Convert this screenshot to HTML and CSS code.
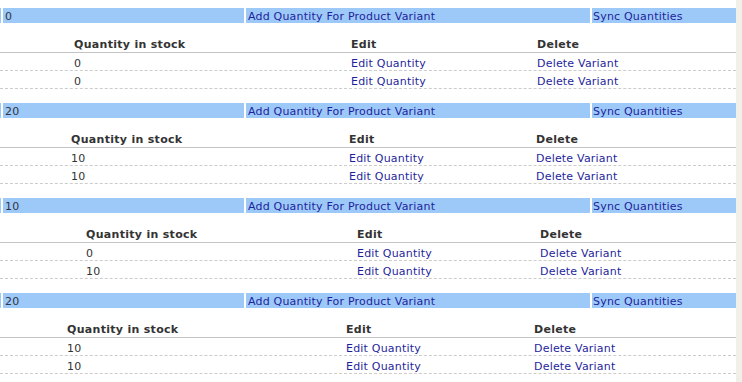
FILE: index.html
```html
<!DOCTYPE html>
<html lang="en">
<head>
    <meta charset="UTF-8">
    <title>Product Variants</title>
    <link rel="stylesheet" href="styles.css">
</head>
<body>
    <div class="page">
        <div class="content">

            <div class="variant v1">
                <div class="bar">
                    <span class="edge"></span>
                    <span class="cell total">0</span>
                    <a class="cell add" href="#">Add Quantity For Product Variant</a>
                    <a class="cell sync" href="#">Sync Quantities</a>
                </div>
                <div class="stock">
                    <div class="row head"><span></span><span>Quantity in stock</span><span>Edit</span><span>Delete</span></div>
                    <div class="row"><span></span><span>0</span><a href="#">Edit Quantity</a><a href="#">Delete Variant</a></div>
                    <div class="row"><span></span><span>0</span><a href="#">Edit Quantity</a><a href="#">Delete Variant</a></div>
                </div>
            </div>

            <div class="variant v2">
                <div class="bar">
                    <span class="edge"></span>
                    <span class="cell total">20</span>
                    <a class="cell add" href="#">Add Quantity For Product Variant</a>
                    <a class="cell sync" href="#">Sync Quantities</a>
                </div>
                <div class="stock">
                    <div class="row head"><span></span><span>Quantity in stock</span><span>Edit</span><span>Delete</span></div>
                    <div class="row"><span></span><span>10</span><a href="#">Edit Quantity</a><a href="#">Delete Variant</a></div>
                    <div class="row"><span></span><span>10</span><a href="#">Edit Quantity</a><a href="#">Delete Variant</a></div>
                </div>
            </div>

            <div class="variant v3">
                <div class="bar">
                    <span class="edge"></span>
                    <span class="cell total">10</span>
                    <a class="cell add" href="#">Add Quantity For Product Variant</a>
                    <a class="cell sync" href="#">Sync Quantities</a>
                </div>
                <div class="stock">
                    <div class="row head"><span></span><span>Quantity in stock</span><span>Edit</span><span>Delete</span></div>
                    <div class="row"><span></span><span>0</span><a href="#">Edit Quantity</a><a href="#">Delete Variant</a></div>
                    <div class="row"><span></span><span>10</span><a href="#">Edit Quantity</a><a href="#">Delete Variant</a></div>
                </div>
            </div>

            <div class="variant v4">
                <div class="bar">
                    <span class="edge"></span>
                    <span class="cell total">20</span>
                    <a class="cell add" href="#">Add Quantity For Product Variant</a>
                    <a class="cell sync" href="#">Sync Quantities</a>
                </div>
                <div class="stock">
                    <div class="row head"><span></span><span>Quantity in stock</span><span>Edit</span><span>Delete</span></div>
                    <div class="row"><span></span><span>10</span><a href="#">Edit Quantity</a><a href="#">Delete Variant</a></div>
                    <div class="row"><span></span><span>10</span><a href="#">Edit Quantity</a><a href="#">Delete Variant</a></div>
                </div>
            </div>

        </div>
        <div class="side"></div>
    </div>
</body>
</html>
```

FILE: styles.css
```css
body {
    margin: 0;
    padding: 0;
    background: #fff;
    font-family: "DejaVu Sans", Verdana, sans-serif;
    font-size: 11px;
    letter-spacing: 0.2px;
    color: #333;
    overflow: hidden;
}

a {
    color: #1f1f9c;
    text-decoration: none;
}

.page {
    display: flex;
    height: 382px;
}

.content {
    width: 736px;
    padding-top: 8px;
}

.side {
    flex: 1;
    background: #f1efea;
}

.variant {
    margin-bottom: 14px;
}

.bar {
    display: flex;
    height: 15px;
    gap: 2px;
}

.bar .edge {
    width: 1px;
    background: #9cc9f8;
}

.bar .cell {
    background: #9cc9f8;
    padding: 2px 0 0 2px;
    line-height: 13px;
    box-sizing: border-box;
}

.bar .total {
    width: 241px;
    color: #334;
}

.bar .add {
    width: 344px;
}

.bar .sync {
    flex: 1;
    padding-left: 1px;
}

.stock {
    margin-top: 11px;
}

.row {
    display: grid;
    height: 13px;
    line-height: 13px;
    padding-top: 4px;
    border-bottom: 1px dashed #cccccc;
}

.row.head {
    height: 15px;
    line-height: 15px;
    padding-top: 3px;
    font-weight: bold;
    letter-spacing: 0.3px;
    border-bottom: 1px solid #c4c4c4;
}

.v1 .row {
    grid-template-columns: 74px 277px 186px 1fr;
}

.v2 .row {
    grid-template-columns: 71px 278px 187px 1fr;
}

.v3 .row {
    grid-template-columns: 86px 271px 183px 1fr;
}

.v4 .row {
    grid-template-columns: 67px 279px 188px 1fr;
}
```
